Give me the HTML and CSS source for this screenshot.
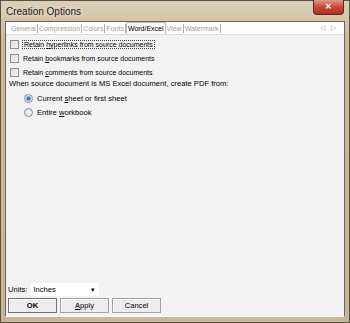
FILE: index.html
```html
<html>
<head>
  <meta charset="UTF-8"/>
  <title>Creation Options</title>
  <link rel="stylesheet" href="styles.css">
</head>
<body>
<div class="window">
  <div class="titlebar">
    <span class="title">Creation Options</span>
    <span class="close">&#x2715;</span>
  </div>
  <div class="client">
    <div class="tabs">
      <span class="tab">General</span>
      <span class="tab">Compression</span>
      <span class="tab">Colors</span>
      <span class="tab">Fonts</span>
      <span class="tab active">Word/Excel</span>
      <span class="tab">View</span>
      <span class="tab">Watermark</span>
      <span class="arrows"><span>&#x25C1;</span><span>&#x25B7;</span></span>
    </div>
    <div class="panel">
      <div class="check"><span class="box"></span><span class="focus">Retain <u>h</u>yperlinks from source documents</span></div>
      <div class="check"><span class="box"></span><span>Retain <u>b</u>ookmarks from source documents</span></div>
      <div class="check"><span class="box"></span><span>Retain <u>c</u>omments from source documents</span></div>
      <p class="label">When source document is MS Excel document, create PDF from:</p>
      <div class="radio"><span class="dot on"></span><span>Current <u>s</u>heet or first sheet</span></div>
      <div class="radio"><span class="dot"></span><span>Entire <u>w</u>orkbook</span></div>
    </div>
    <div class="units">
      <span>Units:</span>
      <span class="select">Inches<span class="caret">&#x25BE;</span></span>
    </div>
    <div class="buttons">
      <span class="btn bold">OK</span>
      <span class="btn"><u>A</u>pply</span>
      <span class="btn">Cancel</span>
    </div>
  </div>
</div>
</body>
</html>
```

FILE: styles.css
```css
body {margin: 0; font: 7.6px "Liberation Sans", Arial, sans-serif; color: #000}
.window {width: 350px; height: 323px; box-sizing: border-box; border: 1px solid #5a5248; background: linear-gradient(#ddd0b9, #cbb99c 40px, #c9b597); display: flex; flex-direction: column; padding: 0 4px 5px 4px}
.titlebar {height: 20px; display: flex; align-items: center; position: relative}
.title {font-size: 10px; margin-left: 1px; margin-top: 1px; color: #1a1a1a; text-shadow: 0 0 4px #f4ede0}
.close {position: absolute; right: 1px; top: -1px; width: 29px; height: 14px; background: linear-gradient(#e49a85, #c9483a 50%, #b03022); border: 1px solid #5a2b22; border-top: 0; border-radius: 0 0 4px 4px; color: #fff; font-size: 8px; font-weight: bold; text-align: center; line-height: 13px}
.client {flex: 1; display: flex; flex-direction: column; background: #f2f2f2; border: 1px solid #6d6457; border-bottom-color: #fff}
.tabs {height: 12px; background: #fff; display: flex; align-items: center; padding-left: 4px; border-bottom: 1px solid #dcdcdc; font-size: 7px}
.tab {color: #a0a0a0; padding: 0 1px; border-right: 1px solid #b0b0b0; line-height: 9px}
.tab.active {color: #000; border: 1px solid #c0c0c0; border-bottom: 0; background: #fafafa; line-height: 11px; padding: 0 1px}
.arrows {margin-left: auto; margin-right: 8px; color: #909090; font-size: 7px; display: flex; gap: 6px}
.panel {flex: 1; padding: 2px 0 0 3px}
.check {display: flex; align-items: center; height: 14px; gap: 4px; margin-left: 1px; font-size: 7px}
.box {width: 9px; height: 9px; box-sizing: border-box; border: 1px solid #8f8f8f; background: linear-gradient(135deg, #dcdcdc, #f6f6f6)}
.focus {outline: 1px dotted #444; outline-offset: 0; padding: 0 1px}
.label {margin: 0 0 3px 0}
.radio {display: flex; align-items: center; height: 14px; gap: 4px; margin-left: 15px}
.dot {width: 9px; height: 9px; box-sizing: border-box; border: 1px solid #909090; border-radius: 50%; background: radial-gradient(#f8f8f8, #d8d8d8)}
.dot.on {background: radial-gradient(#2a5fb0 0, #3f7fcf 1.5px, #dde6f0 2.8px, #eaeaea)}
.units {display: flex; align-items: center; gap: 4px; padding: 0 0 2px 2px}
.select {width: 66px; height: 13px; background: #fff; display: flex; align-items: center; padding-left: 2px; position: relative}
.caret {position: absolute; right: 4px; font-size: 7px}
.buttons {display: flex; gap: 3px; padding: 0 0 3px 2px}
.btn {width: 49px; height: 15px; box-sizing: border-box; border: 1px solid #a0a0a0; background: #ececec; display: flex; align-items: center; justify-content: center; box-shadow: inset 1px 1px #fff}
.btn.bold {font-weight: bold; border-color: #707070}
u {text-decoration: underline}
```
